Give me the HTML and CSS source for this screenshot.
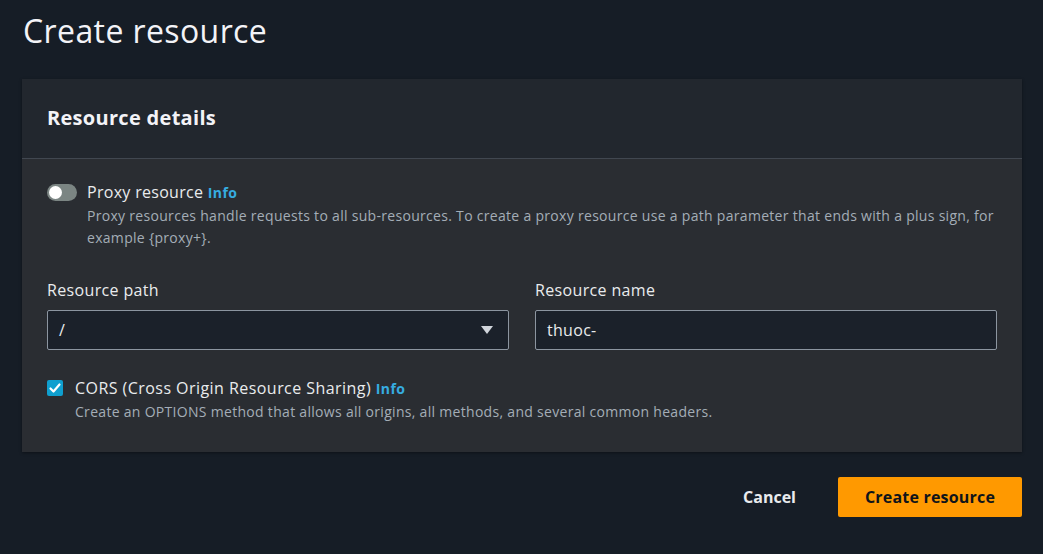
FILE: index.html
```html
<!DOCTYPE html>
<html>
<head>
<meta charset="utf-8">
<link rel="stylesheet" href="styles.css">
</head>
<body>
<div class="page">
  <h1 class="title">Create resource</h1>
  <div class="card">
    <div class="card-header"><h2>Resource details</h2></div>
    <div class="card-body">
      <div class="toggle-row">
        <span class="toggle"><span class="knob"></span></span>
        <div class="toggle-text">
          <div class="label">Proxy resource <a class="info">Info</a></div>
          <div class="desc">Proxy resources handle requests to all sub-resources. To create a proxy resource use a path parameter that ends with a plus sign, for example {proxy+}.</div>
        </div>
      </div>
      <div class="fields">
        <div class="field">
          <div class="field-label">Resource path</div>
          <div class="select">
            <span>/</span>
            <svg class="caret" width="14" height="10" viewBox="0 0 14 10"><path d="M1 1h12L7 9z" fill="#d1d5db"/></svg>
          </div>
        </div>
        <div class="field">
          <div class="field-label">Resource name</div>
          <div class="input">thuoc-</div>
        </div>
      </div>
      <div class="check-row">
        <span class="checkbox"><svg width="16" height="16" viewBox="0 0 16 16"><path d="M3.5 8.5l3 3 6-7" fill="none" stroke="#fff" stroke-width="2.2" stroke-linecap="round" stroke-linejoin="round"/></svg></span>
        <div class="toggle-text">
          <div class="label label-wide">CORS (Cross Origin Resource Sharing) <a class="info">Info</a></div>
          <div class="desc">Create an OPTIONS method that allows all origins, all methods, and several common headers.</div>
        </div>
      </div>
    </div>
  </div>
  <div class="actions">
    <button class="btn-link">Cancel</button>
    <button class="btn-primary">Create resource</button>
  </div>
</div>
</body>
</html>
```
FILE: styles.css
```css
* { box-sizing: border-box; }
html, body { margin: 0; padding: 0; }
body {
  background: #161d26;
  font-family: "Open Sans", "Noto Sans", sans-serif;
  color: #e9ebed;
  width: 1043px;
  height: 554px;
  overflow: hidden;
}
.page { padding: 8px 21px 0 22px; }
.title {
  margin: 0 0 0 1px;
  font-size: 32px;
  font-weight: 400;
  line-height: 46px;
  letter-spacing: 0.4px;
  color: #f3f3f7;
  height: 71px;
}
.card {
  background: #2a2d32;
  box-shadow: 0 1px 3px rgba(0,0,0,0.4);
}
.card-header {
  background: #22272e;
  height: 80px;
  border-bottom: 1px solid #414750;
  padding: 0 25px 2px;
  display: flex;
  align-items: center;
}
.card-header h2 {
  margin: 0;
  font-size: 20px;
  font-weight: 700;
  letter-spacing: 0.3px;
  color: #f3f3f7;
}
.card-body { padding: 22px 25px 29px; }
.toggle-row, .check-row { display: flex; gap: 10px; }
.toggle {
  flex: none;
  width: 30px; height: 17px;
  margin-top: 3px;
  border-radius: 9px;
  background: #7b8583;
  position: relative;
}
.knob {
  position: absolute;
  left: 2px; top: 2px;
  width: 13px; height: 13px;
  border-radius: 50%;
  background: #fff;
}
.label { font-size: 16px; line-height: 22px; color: #e9ebed; letter-spacing: 0.3px; }
.label-wide { letter-spacing: 0.45px; }
.info { color: #36ace0; font-weight: 700; font-size: 14px; letter-spacing: 0.4px; }
.desc { font-size: 14px; line-height: 22px; color: #a4adb7; letter-spacing: 0.3px; margin-top: 1px; }
.fields {
  display: grid;
  grid-template-columns: 1fr 1fr;
  gap: 26px;
  margin-top: 30px;
}
.field-label { font-size: 16px; line-height: 22px; color: #e9ebed; margin-bottom: 9px; letter-spacing: 0.35px; }
.select, .input {
  height: 40px;
  border: 1px solid #8c95a0;
  border-radius: 2px;
  background: #1b212a;
  display: flex;
  align-items: center;
  padding: 0 14px 0 11px;
  font-size: 16px;
  color: #e9ebed;
  letter-spacing: 0.3px;
}
.select { justify-content: space-between; }
.check-row { margin-top: 27px; gap: 12px; }
.checkbox {
  flex: none;
  width: 16px; height: 16px;
  margin-top: 3px;
  border-radius: 2px;
  background: #0f9fcf;
  display: flex;
}
.actions {
  display: flex;
  justify-content: flex-end;
  align-items: center;
  gap: 42px;
  margin-top: 25px;
}
.btn-link {
  background: none; border: none;
  font: 700 16px "Open Sans", "Noto Sans", sans-serif;
  color: #e9ebed;
  padding: 0;
}
.btn-primary {
  background: #ff9900;
  border: none;
  border-radius: 2px;
  width: 184px; height: 40px;
  font: 700 16px "Open Sans", "Noto Sans", sans-serif;
  color: #0f141a;
  letter-spacing: 0.2px;
}
```
